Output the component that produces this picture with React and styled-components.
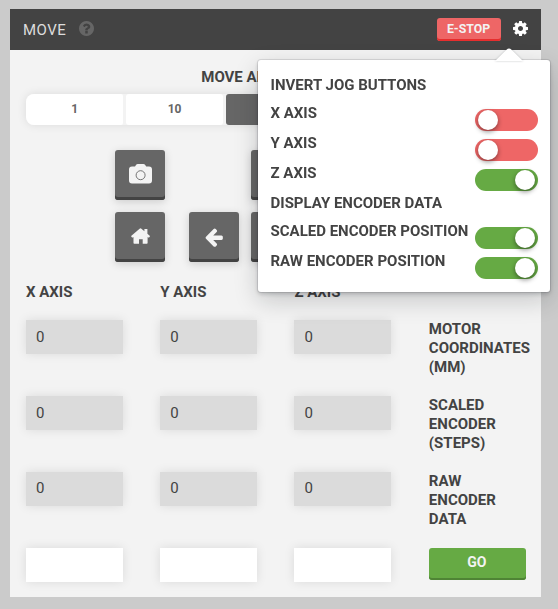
import React from "react";
import styled, { createGlobalStyle } from "styled-components";

const GlobalStyle = createGlobalStyle`
  *, *::before, *::after { box-sizing: border-box; }
  html { height: 100%; background: #cbcbcb; }
  body {
    margin: 0;
    color: #434343;
    font-family: Roboto, "Liberation Sans", sans-serif;
    font-size: 15px;
    overflow: hidden;
  }
  button, input { font: inherit; border: 0; margin: 0; }
`;

const Page = styled.main`
  padding: 9px 17px 12px 10px;
`;

const Widget = styled.section`
  height: 588px;
  background: #f3f3f3;
`;

const Header = styled.header`
  display: flex;
  align-items: center;
  height: 41px;
  padding: 0 13px;
  background: #434343;
`;

const Title = styled.h3`
  margin: 0 13px 0 0;
  color: #dddddd;
  font-size: 15px;
  font-weight: 400;
  letter-spacing: 0.5px;
`;

const Glyph = styled.svg`
  display: block;
  width: ${(p) => p.$w}px;
  height: ${(p) => p.$h}px;
  fill: ${(p) => p.$color};
`;

const StopButton = styled.button`
  width: 64px;
  height: 23.5px;
  margin: 0 12px 0 auto;
  padding: 0 1px 2px 0;
  border-radius: 3px;
  background: #ee6666;
  box-shadow: inset 0 -2px 0 #e62e2e;
  color: #f3f3f3;
  font-size: 12.3px;
  font-weight: 700;
`;

const HeaderIcon = styled.div`
  position: relative;
  margin-bottom: 2px;
`;

const Popover = styled.div`
  position: absolute;
  z-index: 2;
  top: 39px;
  right: -22px;
  width: 292px;
  height: 232px;
  padding: 10px 12px 10px 12.5px;
  border-radius: 3px;
  background: #fff;
  box-shadow: 0 0 0 1px rgba(16, 22, 26, 0.1), 0 2px 4px rgba(16, 22, 26, 0.2),
    0 8px 24px rgba(16, 22, 26, 0.2);
  will-change: transform;
`;

const Caret = styled.svg`
  position: absolute;
  top: -13px;
  left: 235px;
  width: 32px;
  height: 14px;
  filter: drop-shadow(0 0 1px rgba(16, 22, 26, 0.25));
`;

const Label = styled.div`
  font-size: 15px;
  font-weight: 700;
  line-height: ${(p) => p.$line || 19}px;
  text-align: ${(p) => p.$align || "left"};
  white-space: ${(p) => (p.$wrap ? "normal" : "nowrap")};
`;

const MenuHeading = styled(Label)`
  height: 28px;
  line-height: 30px;
`;

const Option = styled.div`
  display: flex;
  justify-content: space-between;
  align-items: flex-start;
  height: 30px;
`;

const Toggle = styled.button`
  display: flex;
  flex: none;
  align-items: center;
  justify-content: ${(p) => (p.$on ? "flex-end" : "flex-start")};
  width: 63px;
  height: 22px;
  margin-top: 11px;
  padding: 0 3px;
  border-radius: 11px;
  background: ${(p) => (p.$on ? "#66aa44" : "#ee6666")};
`;

const Knob = styled.span`
  width: 20px;
  height: 20px;
  border-radius: 50%;
  background: #fff;
  box-shadow: 0 2px 5px rgba(0, 0, 0, 0.45);
`;

const Body = styled.div`
  padding: 18px 16px 0;
`;

const Steps = styled.div`
  display: grid;
  grid-template-columns: repeat(5, 97.3px);
  gap: 2.7px;
  height: 31px;
  margin-top: 7px;
  border-radius: 8px;
  box-shadow: 0 0 10px rgba(0, 0, 0, 0.1);
`;

const Step = styled.button`
  padding: 0 0 2px;
  border-radius: 3px;
  background: ${(p) => (p.$active ? "#666" : "#fff")};
  color: ${(p) => (p.$active ? "#fff" : "#666")};
  font-size: 12px;
  font-weight: 700;
  &:first-child { border-radius: 8px 2px 2px 8px; }
  &:last-child { border-radius: 2px 8px 8px 2px; }
`;

const JogPad = styled.div`
  display: grid;
  grid-template-columns: 50px 50px 50px;
  grid-auto-rows: 50px;
  column-gap: 24px;
  row-gap: 12px;
  margin: 25px 0 0 89px;
`;

const JogButton = styled.button`
  display: flex;
  align-items: center;
  justify-content: center;
  width: 50px;
  height: 50px;
  padding: 0 0 2px;
  border-radius: 3px;
  background: #666;
  box-shadow: inset 0 -3px 0 #434343, 0 2px 8px rgba(0, 0, 0, 0.16);
`;

const UpButton = styled(JogButton)`
  grid-column: 3;
  margin-left: -12px;
`;

const LeftButton = styled(JogButton)`
  padding-bottom: 0;
`;

const RightColumn = styled(JogButton)`
  margin-left: -12px;
`;

const Readings = styled.div`
  display: grid;
  grid-template-columns: 97px 97px 97.3px 97px;
  grid-template-rows: 37px repeat(4, 76px);
  column-gap: 37.2px;
  margin-top: 21px;
`;

const Field = styled.input`
  width: 97px;
  height: 34px;
  padding: 0 10px ${(p) => (p.$lift ? 2 : 0)}px;
  border-radius: 0;
  outline: none;
  background: ${(p) => (p.readOnly ? "#dbdbdb" : "#fff")};
  box-shadow: 0 0 10px rgba(0, 0, 0, 0.1);
  color: #434343;
  font-size: 15px;
`;

const GoButton = styled.button`
  width: 97px;
  height: 31.5px;
  padding: 0 1px 3px 0;
  border-radius: 3px;
  background: #66aa44;
  box-shadow: inset 0 -2px 0 #4f8435;
  color: #f3f3f3;
  font-size: 14px;
  font-weight: 700;
`;

const HelpIcon = () => (
  <Glyph viewBox="128 128 1536 1536" $w={15} $h={15} $color="#666">
    <path d="M1024 1376v-192q0-14-9-23t-23-9h-192q-14 0-23 9t-9 23v192q0 14 9 23t23 9h192q14 0 23-9t9-23zm256-672q0-88-55.5-163t-138.5-116-170-41q-243 0-371 213-15 24 8 42l132 100q7 6 19 6 16 0 25-12 53-68 86-92 34-24 86-24 48 0 85.5 26t37.5 59q0 38-20 61t-68 45q-63 28-115.5 86.5t-52.5 125.5v36q0 14 9 23t23 9h192q14 0 23-9t9-23q0-19 21.5-49.5t54.5-49.5q32-18 49-28.5t46-35 44.5-48 28-60.5 12.5-81zm384 192q0 209-103 385.5t-279.5 279.5-385.5 103-385.5-103-279.5-279.5-103-385.5 103-385.5 279.5-279.5 385.5-103 385.5 103 279.5 279.5 103 385.5z" />
  </Glyph>
);

const GearIcon = () => (
  <Glyph viewBox="128 128 1536 1536" $w={15} $h={15} $color="#fff">
    <path d="M1152 896q0-106-75-181t-181-75-181 75-75 181 75 181 181 75 181-75 75-181zm512-109v222q0 12-8 23t-20 13l-185 28q-19 54-39 91 35 50 107 138 10 12 10 25t-9 23q-27 37-99 108t-94 71q-12 0-26-9l-138-108q-44 23-91 38-16 136-29 186-7 28-36 28h-222q-14 0-24.5-8.5t-11.5-21.5l-28-184q-49-16-90-37l-141 107q-10 9-25 9-14 0-25-11-126-114-165-168-7-10-7-23 0-12 8-23 15-21 51-66.5t54-70.5q-27-50-41-99l-183-27q-13-2-21-12.5t-8-23.5v-222q0-12 8-23t19-13l186-28q14-46 39-92-40-57-107-138-10-12-10-24 0-10 9-23 26-36 98.5-107.5t94.5-71.5q13 0 26 10l138 107q44-23 91-38 16-136 29-186 7-28 36-28h222q14 0 24.5 8.5t11.5 21.5l28 184q49 16 90 37l142-107q9-9 24-9 13 0 25 10 129 119 165 170 7 8 7 22 0 12-8 23-15 21-51 66.5t-54 70.5q26 50 41 98l183 28q13 2 21 12.5t8 23.5z" />
  </Glyph>
);

const CameraIcon = () => (
  <Glyph viewBox="0 0 23 20" $w={23} $h={20} $color="#f3f3f3">
    <path d="M3 2.6h3L7 1Q7.6 0 8.800 0h5.600Q15.500 0 16.200 1l1 1.600H20q3 0 3 3V16.500q0 3-3 3H3q-3 0-3-3V5.600q0-3 3-3z" />
    <circle cx="11.600" cy="11.200" r="4.500" fill="none" stroke="#666" strokeWidth="0.900" />
  </Glyph>
);

const HomeIcon = () => (
  <Glyph viewBox="0 0 19 16" $w={19} $h={16} $color="#f3f3f3">
    <path d="M8.600.7q.9-.7 1.800 0l3 2.500V1h3v4.700l2.300 2q.5.500.1.900l-.7.800q-.4.400-.9 0l-.6-.4v6q0 .8-.8.800h-4.100v-4.500H8v4.500H3.300q-.8 0-.8-.8V9l-.6.400q-.5.400-.9 0L.3 8.600q-.4-.4.100-.9z" />
  </Glyph>
);

const ArrowIcon = () => (
  <Glyph viewBox="150 130 1520 1620" $w={18} $h={19} $color="#f3f3f3">
    <path d="M1664 896v128q0 53-32.500 90.500t-84.500 37.500h-704l293 294q38 36 38 90t-38 90l-75 76q-37 37-90 37-52 0-91-37l-651-652q-37-37-37-90 0-52 37-91l651-650q38-38 91-38 52 0 90 38l75 74q38 38 38 91t-38 91l-293 293h704q52 0 84.500 37.500t32.500 90.500z" />
  </Glyph>
);

const Setting = ({ label, on }) => (
  <Option>
    <Label $line={30}>{label}</Label>
    <Toggle $on={on} aria-label={label}>
      <Knob />
    </Toggle>
  </Option>
);

const SettingsMenu = () => (
  <Popover>
    <Caret viewBox="0 0 32 14">
      <path d="M2 14 L13.500 2.700 Q16 .3 18.500 2.700 L30 14z" fill="#fff" />
    </Caret>
    <MenuHeading>INVERT JOG BUTTONS</MenuHeading>
    <Setting label="X AXIS" />
    <Setting label="Y AXIS" />
    <Setting label="Z AXIS" on />
    <MenuHeading>DISPLAY ENCODER DATA</MenuHeading>
    <Setting label="SCALED ENCODER POSITION" on />
    <Setting label="RAW ENCODER POSITION" on />
  </Popover>
);

const axes = ["X AXIS", "Y AXIS", "Z AXIS"];
const rows = ["MOTOR COORDINATES (MM)", "SCALED ENCODER (STEPS)", "RAW ENCODER DATA"];

export default function App() {
  return (
    <Page>
      <GlobalStyle />
      <Widget>
        <Header>
          <Title>MOVE</Title>
          <HeaderIcon>
            <HelpIcon />
          </HeaderIcon>
          <StopButton>E-STOP</StopButton>
          <HeaderIcon>
            <GearIcon />
            <SettingsMenu />
          </HeaderIcon>
        </Header>
        <Body>
          <Label $align="center">MOVE AMOUNT (MM)</Label>
          <Steps>
            {[1, 10, 100, 1000, 10000].map((n) => (
              <Step key={n} $active={n === 100}>{n}</Step>
            ))}
          </Steps>
          <JogPad>
            <JogButton><CameraIcon /></JogButton>
            <UpButton />
            <JogButton><HomeIcon /></JogButton>
            <LeftButton><ArrowIcon /></LeftButton>
            <RightColumn />
          </JogPad>
          <Readings>
            {axes.map((a) => <Label key={a}>{a}</Label>)}
            <span />
            {rows.map((row, i) => (
              <React.Fragment key={row}>
                {axes.map((a) => (
                  <Field key={a} readOnly $lift={i === 2} value="0" aria-label={`${a} ${row}`} />
                ))}
                <Label $wrap>{row}</Label>
              </React.Fragment>
            ))}
            {axes.map((a) => <Field key={a} aria-label={a} />)}
            <GoButton>GO</GoButton>
          </Readings>
        </Body>
      </Widget>
    </Page>
  );
}
